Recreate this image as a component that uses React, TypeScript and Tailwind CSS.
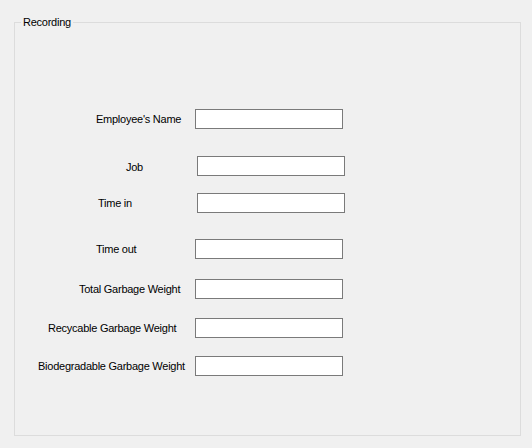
const rows = [
  { label: "Employee's Name", row: "mt-[80px] pl-[81px]", lbl: "w-[99px]" },
  { label: "Job", row: "mt-[27px] pl-[111px]", lbl: "w-[71px] pt-[3px]" },
  { label: "Time in", row: "mt-[17px] pl-[83px]", lbl: "w-[99px]" },
  { label: "Time out", row: "mt-[26px] pl-[81px]", lbl: "w-[99px]" },
  { label: "Total Garbage Weight", row: "mt-[20px] pl-[64px]", lbl: "w-[116px]" },
  { label: "Recycable Garbage Weight", row: "mt-[19px] pl-[33px]", lbl: "w-[147px]" },
  { label: "Biodegradable Garbage Weight", row: "mt-[18px] pl-[23px]", lbl: "w-[157px]" },
];

export default function App() {
  return (
    <div className="h-[448px] w-[532px] overflow-hidden bg-[#f0f0f0] pt-[15px] pl-[14px] font-['Liberation_Sans',Arial,sans-serif] text-[11px] tracking-[-0.25px] text-black">
      <fieldset className="h-[421px] w-[507px] border border-[#dcdcdc]">
        <legend className="ml-[6px] px-[2px] leading-[14px]">Recording</legend>
        <div className="flex flex-col">
          {rows.map((r) => (
            <div key={r.label} className={`flex h-[20px] items-center ${r.row}`}>
              <span className={`shrink-0 ${r.lbl}`}>{r.label}</span>
              <input
                type="text"
                className="h-[20px] w-[148px] shrink-0 border border-[#7a7a7a] bg-white outline-none"
              />
            </div>
          ))}
        </div>
      </fieldset>
    </div>
  );
}
